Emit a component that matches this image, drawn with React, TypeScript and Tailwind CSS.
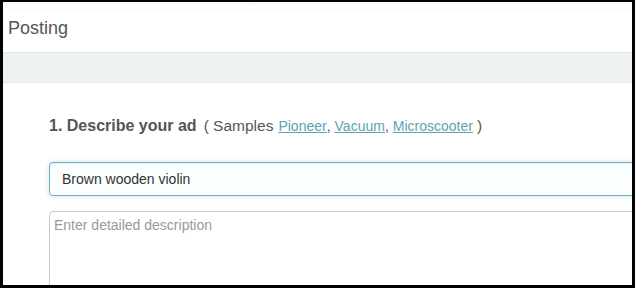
import React from "react";

export default function App() {
  return (
    <div className="w-[635px] h-[288px] bg-black pt-[2px] pl-[3px] pr-[3px] pb-[3px]">
      <div className="w-full h-full bg-white overflow-hidden flex flex-col font-['Liberation_Sans',Arial,sans-serif]">
        <div className="h-[50px] shrink-0 flex items-center pl-[5px] bg-gradient-to-b from-[#f7f8f8] to-white to-[20%]">
          <span className="text-[18px] text-[#555] leading-none mt-[2px]">Posting</span>
        </div>
        <div className="h-[31px] shrink-0 bg-[#eff2f2] border-y border-[#e4e7e7]" />
        <div className="pl-[46px] pt-[33px] flex flex-col">
          <div className="h-[20px] flex items-center whitespace-nowrap text-[#555]">
            <span className="text-[16px] font-bold">1. Describe your ad</span>
            <span className="text-[15.5px] ml-[7px]">( Samples</span>
            <a href="#" className="text-[14px] ml-[5px] text-[#58a3b6] underline">Pioneer</a>
            <span className="text-[14px]">,</span>
            <a href="#" className="text-[14px] ml-[4px] text-[#58a3b6] underline">Vacuum</a>
            <span className="text-[14px]">,</span>
            <a href="#" className="text-[14px] ml-[4px] text-[#58a3b6] underline">Microscooter</a>
            <span className="text-[15.5px] ml-[4px]">)</span>
          </div>
          <div className="mt-[26px] w-[620px] h-[34px] shrink-0 rounded-[4px] border border-[#7fa9bd] bg-[#fbfeff] shadow-[inset_0_1px_2px_rgba(0,0,0,0.06),0_0_5px_rgba(120,190,230,0.45)] flex items-center pl-[12px]">
            <span className="text-[14px] text-[#333]">Brown wooden violin</span>
          </div>
          <div className="mt-[15px] w-[620px] h-[120px] shrink-0 rounded-[4px] border border-[#cccccc] pl-[4px] pt-[1px]">
            <span className="text-[14px] text-[#999] leading-[20px]">Enter detailed description</span>
          </div>
        </div>
      </div>
    </div>
  );
}
